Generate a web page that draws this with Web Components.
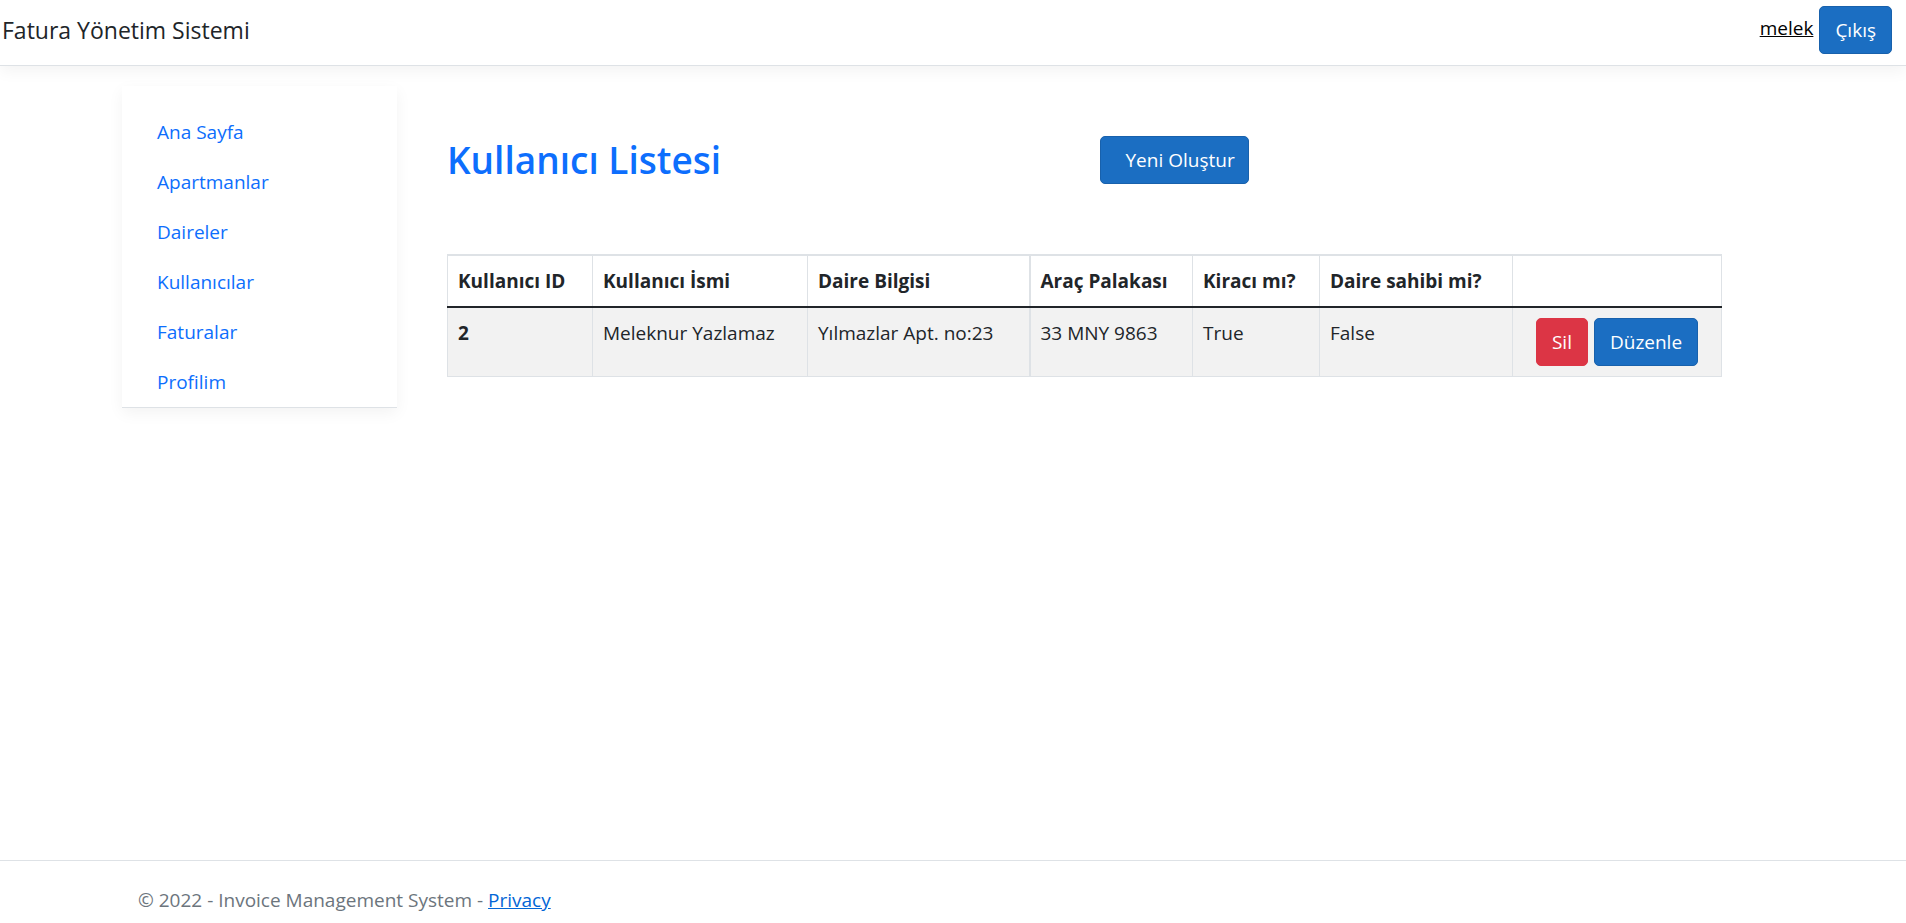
<!DOCTYPE html>
<html lang="tr">
<head>
<meta charset="utf-8">
<meta name="viewport" content="width=device-width, initial-scale=1">
<title>Fatura Yönetim Sistemi</title>
<style>
  html { height: 100%; }
  body {
    margin: 0;
    min-height: 100%;
    display: flex;
    background: #fff;
    color: #212529;
    font: 19px/30px "Open Sans", "Noto Sans", sans-serif;
  }
</style>
</head>
<body>
<invoice-app></invoice-app>
<script>
  const define = (name, html) => customElements.define(name, class extends HTMLElement {
    constructor() {
      super();
      const template = document.createElement('template');
      template.innerHTML = html;
      this.attachShadow({ mode: 'open' }).append(template.content.cloneNode(true));
    }
  });

  define('app-button', `
    <style>
      :host { display: inline-block; }
      button {
        display: block;
        box-sizing: border-box;
        height: 48px;
        padding: 0 var(--button-end, 15px) 0 var(--button-start, 15px);
        border: 1px solid var(--button-border, #1861ac);
        border-radius: 5px;
        background: var(--button-fill, #1b6ec2);
        color: #fff;
        font: inherit;
        white-space: nowrap;
        cursor: pointer;
      }
      :host([kind="danger"]) { --button-fill: #dc3545; --button-border: #dc3545; }
      :host([kind="create"]) { --button-start: 25px; --button-end: 13px; }
    </style>
    <button type="button"><slot></slot></button>`);

  define('app-header', `
    <style>
      :host { display: block; }
      header {
        display: flex;
        justify-content: space-between;
        align-items: center;
        box-sizing: border-box;
        height: 66px;
        padding: 0 14px 6px 2px;
        border-bottom: 1px solid #dee2e6;
        box-shadow: 0 5px 15px rgba(0, 0, 0, .05);
      }
      .brand { font-size: 23px; color: #212529; text-decoration: none; }
      .account { display: flex; align-items: center; gap: 6px; }
      .user { color: #000; padding-bottom: 4px; }
    </style>
    <header>
      <a class="brand" href="#">Fatura Yönetim Sistemi</a>
      <div class="account">
        <a class="user" href="#">melek</a>
        <app-button>Çıkış</app-button>
      </div>
    </header>`);

  define('nav-item', `
    <style>
      :host { display: block; }
      a { display: block; padding: 10px 0; color: #0d6efd; text-decoration: none; }
    </style>
    <a href="#"><slot></slot></a>`);

  define('side-nav', `
    <style>
      :host { display: block; }
      nav {
        padding: 21px 35px 0;
        border-bottom: 1px solid #dee2e6;
        box-shadow: 0 5px 15px rgba(0, 0, 0, .05);
      }
    </style>
    <nav><slot></slot></nav>`);

  define('user-table', `
    <style>
      :host { display: block; }
      table { width: 100%; table-layout: fixed; border-collapse: collapse; }
      th, td {
        padding: 10px;
        border: 1px solid #dee2e6;
        text-align: left;
        vertical-align: top;
        white-space: nowrap;
      }
      thead th { border-top-width: 2px; border-bottom: 2px solid #212529; }
      tbody tr { background: #f2f2f2; }
      .plate { border-left-width: 2px; }
      .actions { display: flex; justify-content: center; gap: 6px; }
    </style>
    <table>
      <colgroup>
        <col style="width:145px"><col style="width:215px"><col style="width:222px">
        <col style="width:163px"><col style="width:127px"><col style="width:193px">
        <col style="width:209px">
      </colgroup>
      <thead>
        <tr>
          <th scope="col">Kullanıcı ID</th>
          <th scope="col">Kullanıcı İsmi</th>
          <th scope="col">Daire Bilgisi</th>
          <th scope="col" class="plate">Araç Palakası</th>
          <th scope="col">Kiracı mı?</th>
          <th scope="col">Daire sahibi mi?</th>
          <th scope="col"></th>
        </tr>
      </thead>
      <tbody>
        <tr>
          <th scope="row">2</th>
          <td>Meleknur Yazlamaz</td>
          <td>Yılmazlar Apt. no:23</td>
          <td class="plate">33 MNY 9863</td>
          <td>True</td>
          <td>False</td>
          <td>
            <div class="actions">
              <app-button kind="danger">Sil</app-button>
              <app-button>Düzenle</app-button>
            </div>
          </td>
        </tr>
      </tbody>
    </table>`);

  define('app-footer', `
    <style>
      :host { display: block; }
      footer { border-top: 1px solid #dee2e6; color: #6c757d; padding-right: 12px; }
      .inner { max-width: 1650px; margin: 0 auto; padding: 24px 16px 8px; box-sizing: border-box; }
      a { color: #0366d6; }
    </style>
    <footer>
      <div class="inner">© 2022 - Invoice Management System - <a href="#">Privacy</a></div>
    </footer>`);

  define('invoice-app', `
    <style>
      :host { display: flex; flex-direction: column; flex: 1; min-width: 0; }
      .body { flex: 1; padding: 20px 12px 0 0; }
      .columns {
        display: grid;
        grid-template-columns: 1fr 5fr;
        align-items: start;
        max-width: 1650px;
        margin: 0 auto;
      }
      main { min-width: 0; padding: 50px 50px 0; }
      .heading {
        display: grid;
        grid-template-columns: 1fr 1fr;
        align-items: center;
        margin-bottom: 70px;
      }
      .heading app-button { justify-self: start; margin-left: 15px; }
      h1 { margin: 0; color: #0d6efd; font-size: 37px; font-weight: 600; line-height: 48px; }
    </style>
    <app-header></app-header>
    <div class="body">
      <div class="columns">
        <side-nav>
          <nav-item>Ana Sayfa</nav-item>
          <nav-item>Apartmanlar</nav-item>
          <nav-item>Daireler</nav-item>
          <nav-item>Kullanıcılar</nav-item>
          <nav-item>Faturalar</nav-item>
          <nav-item>Profilim</nav-item>
        </side-nav>
        <main>
          <div class="heading">
            <h1>Kullanıcı Listesi</h1>
            <app-button kind="create">Yeni Oluştur</app-button>
          </div>
          <user-table></user-table>
        </main>
      </div>
    </div>
    <app-footer></app-footer>`);
</script>
</body>
</html>
